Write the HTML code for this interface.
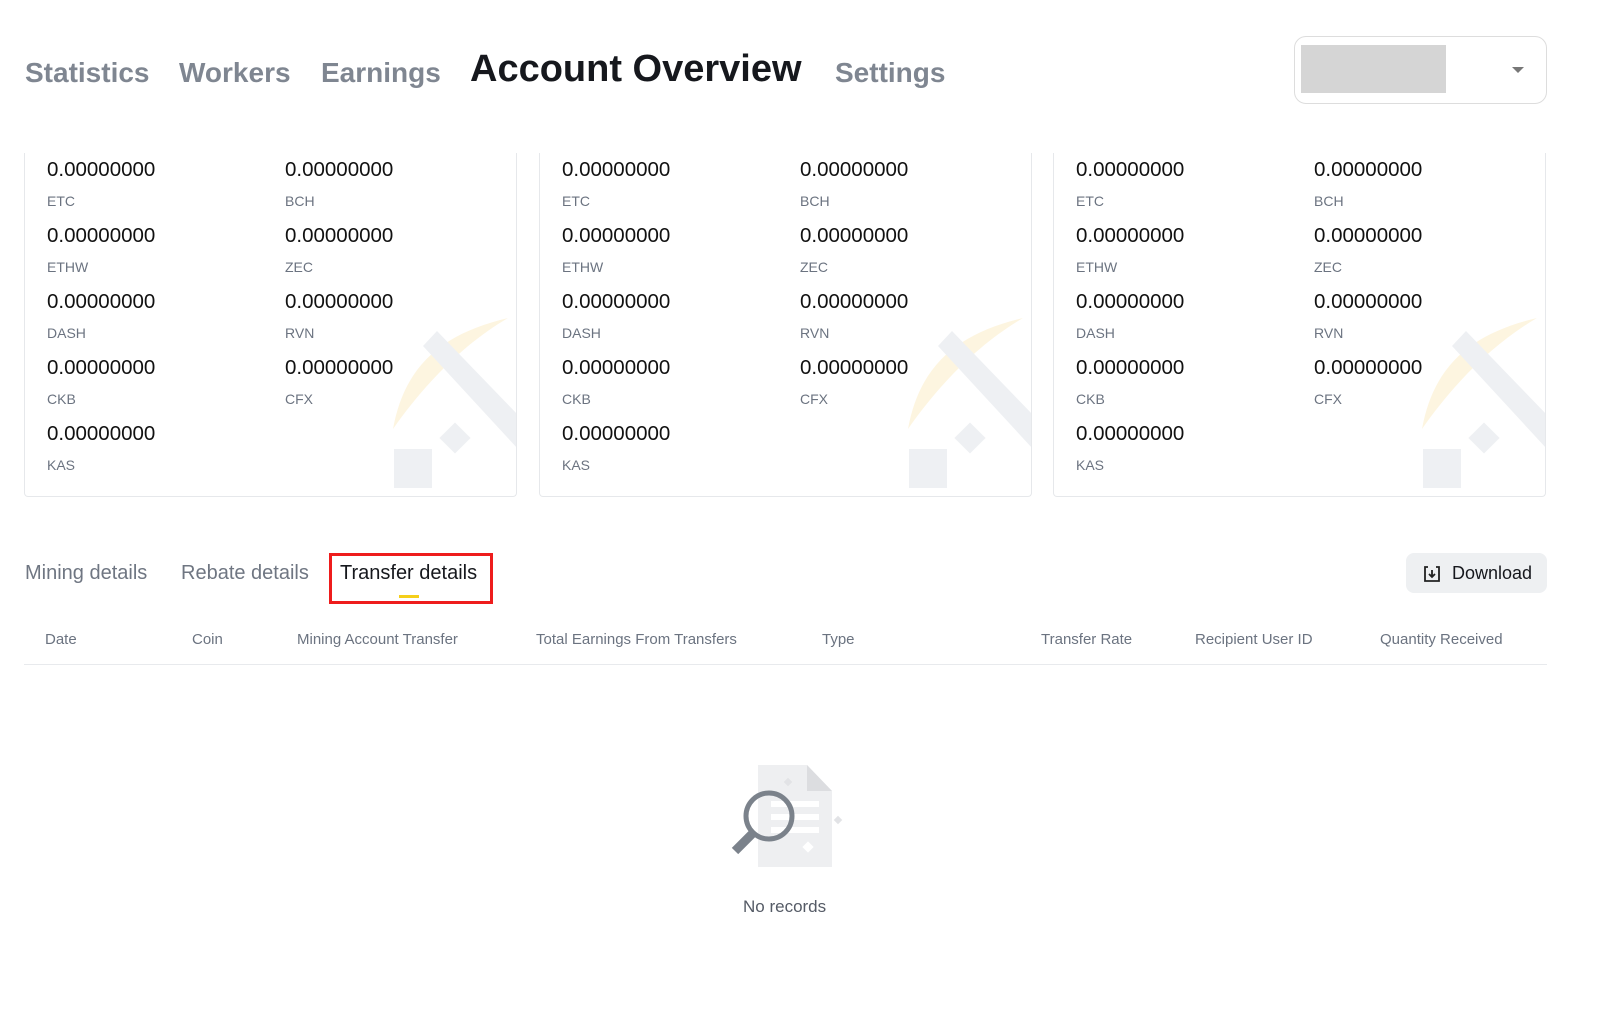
<!DOCTYPE html>
<html><head><meta charset="utf-8"><style>
*{margin:0;padding:0;box-sizing:border-box}
body{width:1600px;height:1023px;background:#fff;font-family:"Liberation Sans",sans-serif;position:relative;overflow:hidden;color:#1a1d24}
.a{position:absolute;white-space:nowrap}
.nav{top:57px;font-size:28px;font-weight:bold;color:#7f8691}
.card{position:absolute;top:153px;width:493px;height:344px;border:1px solid #e6e8eb;border-top:none;border-radius:0 0 4px 4px;overflow:hidden}
.n{position:absolute;font-size:20.5px;color:#111}
.l{position:absolute;font-size:14px;color:#6b7380}
.th{top:631px;font-size:15px;color:#6b7380}
</style></head><body>
<div class="a nav" style="left:25px">Statistics</div>
<div class="a nav" style="left:179px">Workers</div>
<div class="a nav" style="left:321px">Earnings</div>
<div class="a" style="left:470px;top:48px;font-size:38px;font-weight:bold;color:#16181d">Account Overview</div>
<div class="a nav" style="left:835px">Settings</div>
<div class="a" style="left:1294px;top:36px;width:253px;height:68px;border:1px solid #ddd;border-radius:12px"></div>
<div class="a" style="left:1301px;top:45px;width:145px;height:48px;background:#d5d5d5"></div>
<div class="a" style="left:1512px;top:67px;width:0;height:0;border-left:6px solid transparent;border-right:6px solid transparent;border-top:6px solid #777"></div>

<div id="cards"></div>
<script>
var xs=[24,539,1053],lab=[["ETC","BCH"],["ETHW","ZEC"],["DASH","RVN"],["CKB","CFX"],["KAS",null]],h="";
xs.forEach(function(x){
 h+='<div class="card" style="left:'+x+'px">';
 h+='<svg style="position:absolute;left:0;top:0" width="493" height="344"><path d="M368 276 C380 210 420 180 483 165 C440 190 400 230 368 276Z" fill="#fdf5e0"/><path d="M398 193 L412 178 L493 262 L493 296Z" fill="#eef0f3"/><rect x="419" y="274" width="22" height="22" transform="rotate(45 430 285)" fill="#eef0f3"/><rect x="369" y="296" width="38" height="39" fill="#eef0f3"/></svg>';
 lab.forEach(function(r,i){
  r.forEach(function(t,j){ if(!t)return; var lx=22+j*238;
   h+='<div class="n" style="left:'+lx+'px;top:'+(5+i*66)+'px">0.00000000</div><div class="l" style="left:'+lx+'px;top:'+(40+i*66)+'px">'+t+'</div>';});
 });
 h+='</div>';
});
document.getElementById('cards').innerHTML=h;
</script>

<div class="a" style="left:25px;top:562px;font-size:20px;color:#6f7682">Mining details</div>
<div class="a" style="left:181px;top:562px;font-size:20px;color:#6f7682">Rebate details</div>
<div class="a" style="left:340px;top:562px;font-size:20px;color:#16181d">Transfer details</div>
<div class="a" style="left:399px;top:595px;width:20px;height:3px;background:#f5cf1a"></div>
<div class="a" style="left:329px;top:553px;width:164px;height:51px;border:3px solid #ee1c1c"></div>
<div class="a" style="left:1406px;top:553px;width:141px;height:40px;background:#eef0f2;border-radius:8px"></div>
<svg class="a" style="left:1423px;top:565px" width="18" height="18" viewBox="0 0 18 18" fill="none" stroke="#222" stroke-width="1.8"><path d="M5 2H2v14h14V2h-3M9 5v7M6 9l3 3 3-3"/></svg>
<div class="a" style="left:1452px;top:563px;font-size:18px;color:#16181d">Download</div>

<div class="a th" style="left:45px">Date</div>
<div class="a th" style="left:192px">Coin</div>
<div class="a th" style="left:297px">Mining Account Transfer</div>
<div class="a th" style="left:536px">Total Earnings From Transfers</div>
<div class="a th" style="left:822px">Type</div>
<div class="a th" style="left:1041px">Transfer Rate</div>
<div class="a th" style="left:1195px">Recipient User ID</div>
<div class="a th" style="left:1380px">Quantity Received</div>
<div class="a" style="left:24px;top:664px;width:1523px;height:1px;background:#e8eaed"></div>

<svg class="a" style="left:720px;top:760px" width="130" height="120">
<path d="M38 5H87L112 31V107H38Z" fill="#eeeff1"/><path d="M87 5L112 31H87Z" fill="#dcdde0"/>
<rect x="51" y="41" width="48" height="6" fill="#fff"/><rect x="51" y="54" width="48" height="6" fill="#fff"/><rect x="51" y="67" width="48" height="6" fill="#fff"/>
<rect x="84" y="83" width="8" height="8" transform="rotate(45 88 87)" fill="#fff"/>
<rect x="65" y="19" width="6" height="6" transform="rotate(45 68 22)" fill="#e2e3e6"/>
<rect x="115" y="57" width="6" height="6" transform="rotate(45 118 60)" fill="#e2e3e6"/>
<circle cx="49" cy="56" r="23" fill="none" stroke="#7b828b" stroke-width="5"/>
<path d="M33 73L15 91" stroke="#7b828b" stroke-width="9"/>
</svg>
<div class="a" style="left:743px;top:897px;font-size:17px;color:#555b66">No records</div>
</body></html>
